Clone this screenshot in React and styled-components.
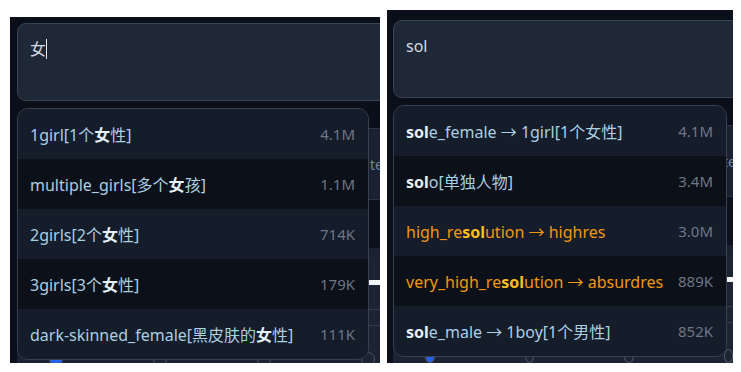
import React from "react";
import styled, { createGlobalStyle } from "styled-components";

const Global = createGlobalStyle`
  html, body { margin: 0; padding: 0; background: #ffffff; }
  body { font-family: "Noto Sans", "Noto Sans CJK SC", sans-serif; }
  * { box-sizing: border-box; }
`;

const Page = styled.div`
  display: flex;
  align-items: flex-start;
  gap: 7px;
  padding-left: 10px;
  width: 741px;
  height: 372px;
`;

const Panel = styled.div`
  position: relative;
  overflow: hidden;
  background: #0b0f19;
  width: ${(p) => p.$w}px;
  height: ${(p) => p.$h}px;
  margin-top: ${(p) => p.$top}px;
  padding: ${(p) => p.$padTop}px 0 0 ${(p) => p.$padLeft}px;
`;

const Prompt = styled.div`
  width: 420px;
  height: 78px;
  background: #1f2837;
  border: 1px solid #3a4352;
  border-radius: 9px;
  padding: 13px 12px;
  color: #d3dbe6;
  font-size: 16px;
  line-height: 24px;
  display: flex;
  align-items: flex-start;
`;

const Caret = styled.span`
  display: inline-block;
  width: 1px;
  height: 20px;
  margin-top: 2px;
  background: #e5e7eb;
`;

const BackCard = styled.div`
  margin-top: 27px;
  height: 72px;
  width: calc(100% + 20px);
  background: #1a2130;
  border: 1px solid #2c3442;
  display: grid;
  grid-template-columns: 1fr 16px;
  align-items: center;
`;

const BackLabel = styled.span`
  color: #6f86a0;
  font-size: 14px;
  white-space: nowrap;
  margin-left: -13px;
`;

const BackGap = styled.div`
  height: 48px;
  background: #0d111b;
`;

const BackSettings = styled.div`
  border-top: 10px solid #1a2130;
  height: 120px;
  background: #1c2433;
  display: flex;
  flex-direction: column;
  padding-top: 22px;
`;

const Slider = styled.div`
  height: 5px;
  background: #f3f4f6;
  margin-left: 40px;
`;

const Rule = styled.div`
  height: 1px;
  background: #343c4a;
  margin-top: ${(p) => p.$mt}px;
`;

const Radios = styled.div`
  display: flex;
  gap: 90px;
  padding-left: 32px;
  margin-top: 26px;
`;

const Radio = styled.span`
  width: 14px;
  height: 14px;
  border-radius: 50%;
  border: 1px solid #4b5563;
  background: ${(p) => (p.$on ? "#2563eb" : "transparent")};
`;

const Dropdown = styled.ul`
  position: absolute;
  left: ${(p) => p.$left}px;
  top: ${(p) => p.$top}px;
  width: ${(p) => p.$w}px;
  margin: 0;
  padding: 0;
  list-style: none;
  border: 1px solid #374151;
  border-radius: 11px;
  overflow: hidden;
  background: #151c2a;
`;

const Row = styled.li`
  height: 50px;
  display: flex;
  align-items: center;
  justify-content: space-between;
  padding: 0 13px 0 12px;
  background: ${(p) => (p.$alt ? "#0c1019" : "#151c2a")};
  font-size: 16px;
`;

const Label = styled.span`
  color: ${(p) => (p.$meta ? "#f0980f" : "#a9cfe2")};
  white-space: nowrap;
`;

const Match = styled.b`
  font-weight: 700;
  color: ${(p) => (p.$meta ? "#ffbf1c" : "#e4f1f8")};
`;

const Count = styled.span`
  color: #6e7686;
  font-size: 15px;
  white-space: nowrap;
`;

const leftItems = [
  { pre: "1girl[1个", m: "女", post: "性]", c: "4.1M" },
  { pre: "multiple_girls[多个", m: "女", post: "孩]", c: "1.1M" },
  { pre: "2girls[2个", m: "女", post: "性]", c: "714K" },
  { pre: "3girls[3个", m: "女", post: "性]", c: "179K" },
  { pre: "dark-skinned_female[黑皮肤的", m: "女", post: "性]", c: "111K" },
];

const rightItems = [
  { pre: "", m: "sol", post: "e_female → 1girl[1个女性]", c: "4.1M" },
  { pre: "", m: "sol", post: "o[单独人物]", c: "3.4M" },
  { pre: "high_re", m: "sol", post: "ution → highres", c: "3.0M", meta: true },
  { pre: "very_high_re", m: "sol", post: "ution → absurdres", c: "889K", meta: true },
  { pre: "", m: "sol", post: "e_male → 1boy[1个男性]", c: "852K" },
];

function Background() {
  return (
    <>
      <BackCard>
        <span />
        <BackLabel>text</BackLabel>
      </BackCard>
      <BackGap />
      <BackSettings>
        <Slider />
        <Rule $mt={24} />
        <Rule $mt={15} />
        <Radios>
          <Radio $on />
          <Radio />
          <Radio />
          <Radio />
        </Radios>
      </BackSettings>
    </>
  );
}

function Suggestions({ items, left, top, w }) {
  return (
    <Dropdown $left={left} $top={top} $w={w}>
      {items.map((it, i) => (
        <Row key={i} $alt={i % 2 === 1}>
          <Label $meta={it.meta}>
            {it.pre}
            <Match $meta={it.meta}>{it.m}</Match>
            {it.post}
          </Label>
          <Count>{it.c}</Count>
        </Row>
      ))}
    </Dropdown>
  );
}

export default function App() {
  return (
    <>
      <Global />
      <Page>
        <Panel $w={370} $h={346} $top={17} $padTop={6} $padLeft={7}>
          <Prompt>
            女<Caret />
          </Prompt>
          <Background />
          <Suggestions items={leftItems} left={7} top={91} w={352} />
        </Panel>
        <Panel $w={346} $h={353} $top={10} $padTop={10} $padLeft={6}>
          <Prompt>sol</Prompt>
          <Background />
          <Suggestions items={rightItems} left={6} top={95} w={334} />
        </Panel>
      </Page>
    </>
  );
}
